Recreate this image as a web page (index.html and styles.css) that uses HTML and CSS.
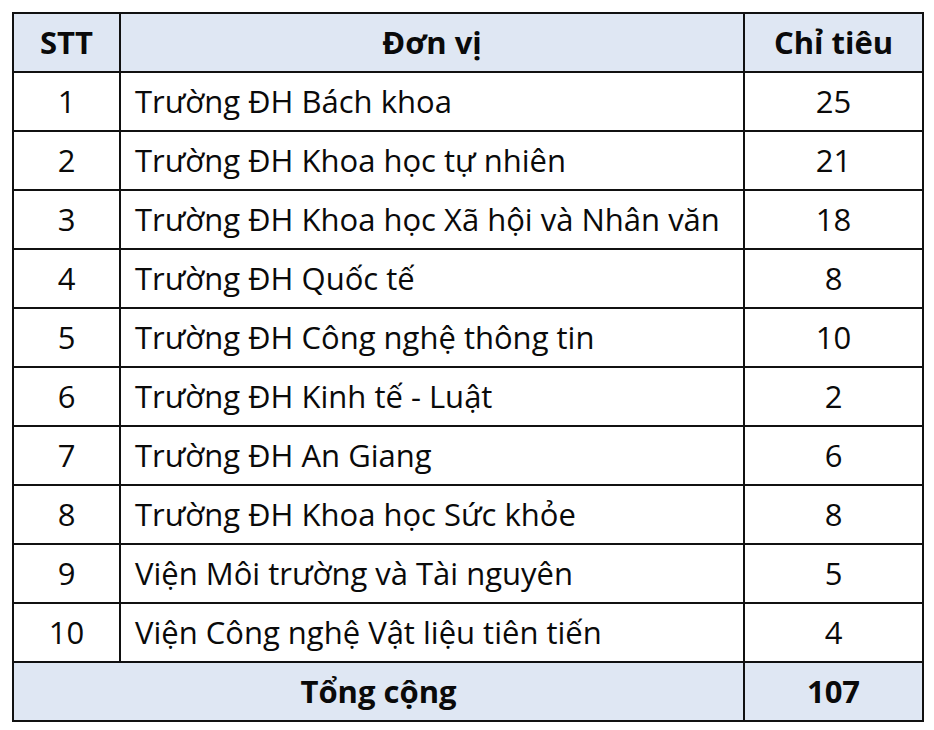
FILE: index.html
```html
<!DOCTYPE html>
<html lang="vi">
<head>
<meta charset="utf-8">
<title>Chỉ tiêu</title>
<link rel="stylesheet" href="styles.css">
</head>
<body>
<table class="quota">
  <colgroup>
    <col class="c-stt">
    <col class="c-unit">
    <col class="c-num">
  </colgroup>
  <thead>
    <tr class="head">
      <th>STT</th>
      <th>Đơn vị</th>
      <th>Chỉ tiêu</th>
    </tr>
  </thead>
  <tbody>
    <tr><td class="ctr">1</td><td class="unit">Trường ĐH Bách khoa</td><td class="ctr">25</td></tr>
    <tr><td class="ctr">2</td><td class="unit">Trường ĐH Khoa học tự nhiên</td><td class="ctr">21</td></tr>
    <tr><td class="ctr">3</td><td class="unit">Trường ĐH Khoa học Xã hội và Nhân văn</td><td class="ctr">18</td></tr>
    <tr><td class="ctr">4</td><td class="unit">Trường ĐH Quốc tế</td><td class="ctr">8</td></tr>
    <tr><td class="ctr">5</td><td class="unit">Trường ĐH Công nghệ thông tin</td><td class="ctr">10</td></tr>
    <tr><td class="ctr">6</td><td class="unit">Trường ĐH Kinh tế - Luật</td><td class="ctr">2</td></tr>
    <tr><td class="ctr">7</td><td class="unit">Trường ĐH An Giang</td><td class="ctr">6</td></tr>
    <tr><td class="ctr">8</td><td class="unit">Trường ĐH Khoa học Sức khỏe</td><td class="ctr">8</td></tr>
    <tr><td class="ctr">9</td><td class="unit">Viện Môi trường và Tài nguyên</td><td class="ctr">5</td></tr>
    <tr><td class="ctr">10</td><td class="unit">Viện Công nghệ Vật liệu tiên tiến</td><td class="ctr">4</td></tr>
  </tbody>
  <tfoot>
    <tr class="foot">
      <th colspan="2">Tổng cộng</th>
      <th>107</th>
    </tr>
  </tfoot>
</table>
</body>
</html>
```

FILE: styles.css
```css
html, body {
  margin: 0;
  padding: 0;
  background: #ffffff;
}

body {
  padding: 12px 0 0 12px;
  font-family: "Open Sans", "Noto Sans", "Liberation Sans", sans-serif;
  color: #0a0a0a;
}

.quota {
  border-collapse: collapse;
  width: 910px;
  table-layout: fixed;
  border: 2px solid #111111;
}

.c-stt { width: 107px; }
.c-unit { width: 624px; }
.c-num { width: 179px; }

.quota th,
.quota td {
  border: 2px solid #111111;
  height: 57px;
  padding: 0;
  font-size: 31px;
  line-height: 1;
  vertical-align: middle;
}

.quota th {
  font-weight: 700;
  text-align: center;
  background: #dfe7f3;
}

.ctr {
  text-align: center;
}

.unit {
  text-align: left;
  padding-left: 14px !important;
}
```
